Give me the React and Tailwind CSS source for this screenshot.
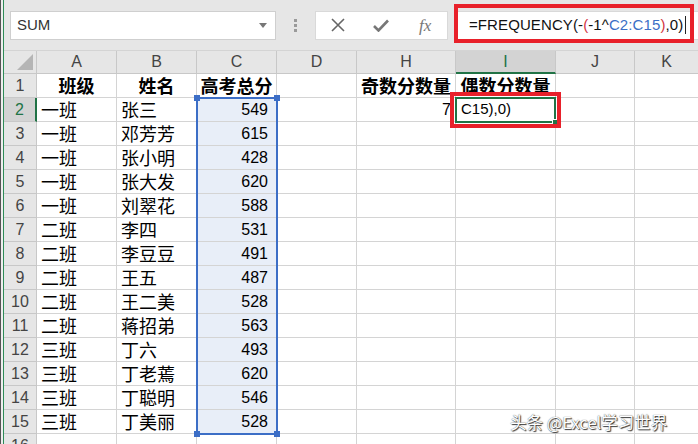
import React from 'react';

const rows = [
    ['一班', '张三', 549],
    ['一班', '邓芳芳', 615],
    ['一班', '张小明', 428],
    ['一班', '张大发', 620],
    ['一班', '刘翠花', 588],
    ['二班', '李四', 531],
    ['二班', '李豆豆', 491],
    ['二班', '王五', 487],
    ['二班', '王二美', 528],
    ['二班', '蒋招弟', 563],
    ['三班', '丁六', 493],
    ['三班', '丁老蔫', 620],
    ['三班', '丁聪明', 546],
    ['三班', '丁美丽', 528],
];

const cjk = "font-['Noto_Sans_CJK_SC',sans-serif]";
const num = "font-['Liberation_Sans','Noto_Sans_CJK_SC',sans-serif]";

const cell = 'h-full border-r border-b border-[#d4d4d4] flex items-center shrink-0';

const App = () => {
    return (
        <div className="w-[698px] h-[444px] overflow-hidden bg-white flex relative">
            {/* left edge of the window behind */}
            <div className="w-[4px] h-full bg-[#eeeeee] border-l border-[#555] border-r border-r-[#2e8b57] shrink-0"></div>

            <div className="flex-1 flex flex-col">
                {/* Formula bar */}
                <div className="h-[51px] bg-[#e6e6e6] flex items-center pl-[6px] border-b border-[#d4d4d4] shrink-0">
                    <div className="w-[266px] h-[29px] bg-white border border-[#cfcfcf] flex items-center pl-[6px] pr-[8px]">
                        <span className={`${num} text-[15px] text-[#333] flex-1`}>SUM</span>
                        <svg width="8" height="5" viewBox="0 0 8 5"><path d="M0 0h8L4 5z" fill="#777" /></svg>
                    </div>
                    <div className="w-[39px] flex flex-col items-center gap-[2px]">
                        <div className="w-[3px] h-[3px] bg-[#9a9a9a]"></div>
                        <div className="w-[3px] h-[3px] bg-[#9a9a9a]"></div>
                        <div className="w-[3px] h-[3px] bg-[#9a9a9a]"></div>
                    </div>
                    <div className="w-[133px] h-[29px] bg-white border border-[#d9d9d9] flex items-center pl-[15px]">
                        <svg width="14" height="14" viewBox="0 0 14 14"><path d="M1 1l12 12M13 1L1 13" stroke="#666" strokeWidth="1.6" /></svg>
                        <svg className="ml-[28px]" width="16" height="13" viewBox="0 0 16 13"><path d="M1 7l4.5 4.5L15 1.5" stroke="#777" strokeWidth="2.6" fill="none" /></svg>
                        <span className="ml-[30px] font-['Liberation_Serif',serif] italic text-[17px] text-[#777] leading-none">fx</span>
                    </div>
                    <div className="flex-1 h-[29px] bg-white ml-[6px] flex items-center pl-[14px] border-y border-l border-[#d9d9d9]">
                        <span className={`${num} text-[15px] tracking-[0.1px] text-[#111] whitespace-nowrap`}>
                            =FREQUENCY(-<span className="text-[#d2353f]">(</span>-1^<span className="text-[#3b6fc6]">C2:C15</span><span className="text-[#d2353f]">)</span>,0)
                        </span>
                        <span className="w-[1px] h-[18px] bg-[#222] ml-[2px]"></span>
                    </div>
                </div>

                {/* Column headers */}
                <div className={`h-[23px] flex bg-[#e6e6e6] text-[16px] text-[#444] ${num} shrink-0`}>
                    <div className="w-[33px] h-full border-r border-b border-[#c8c8c8] flex items-end justify-end pr-[3px] pb-[3px] shrink-0">
                        <svg width="16" height="16" viewBox="0 0 16 16"><path d="M16 0V16H0z" fill="#b5b5b5" /></svg>
                    </div>
                    <div className="w-[80px] h-full border-r border-b border-[#c8c8c8] flex items-center justify-center shrink-0">A</div>
                    <div className="w-[80px] h-full border-r border-b border-[#c8c8c8] flex items-center justify-center shrink-0">B</div>
                    <div className="w-[80px] h-full border-r border-b border-[#c8c8c8] flex items-center justify-center shrink-0">C</div>
                    <div className="w-[80px] h-full border-r border-b border-[#c8c8c8] flex items-center justify-center shrink-0">D</div>
                    <div className="w-[99px] h-full border-r border-b border-[#c8c8c8] flex items-center justify-center shrink-0">H</div>
                    <div className="w-[100px] h-full border-r border-[#c8c8c8] border-b-2 border-b-[#217346] bg-[#d3d3d3] text-[#217346] flex items-center justify-center shrink-0">I</div>
                    <div className="w-[79px] h-full border-r border-b border-[#c8c8c8] flex items-center justify-center shrink-0">J</div>
                    <div className="flex-1 h-full border-b border-[#c8c8c8] flex items-center justify-center">K</div>
                </div>

                {/* Row 1 */}
                <div className={`h-[24px] flex shrink-0 ${cjk} text-[18px] font-bold text-black`}>
                    <div className={`w-[33px] h-full bg-[#e6e6e6] border-r border-b border-[#c8c8c8] flex items-center justify-center text-[16px] font-normal text-[#444] ${num} shrink-0`}>1</div>
                    <div className={`${cell} w-[80px] justify-center`}>班级</div>
                    <div className={`${cell} w-[80px] justify-center`}>姓名</div>
                    <div className={`${cell} w-[80px] justify-center whitespace-nowrap`}>高考总分</div>
                    <div className={`${cell} w-[80px]`}></div>
                    <div className={`${cell} w-[99px] justify-center whitespace-nowrap`}>奇数分数量</div>
                    <div className={`${cell} w-[100px] justify-center whitespace-nowrap`}>偶数分数量</div>
                    <div className={`${cell} w-[79px]`}></div>
                    <div className="flex-1 h-full border-b border-[#d4d4d4]"></div>
                </div>

                {/* Data rows */}
                {rows.map((r, i) => (
                    <div key={i} className={`h-[24px] flex shrink-0 text-[18px] text-black ${cjk}`}>
                        {i === 0 ? (
                            <div className={`w-[33px] h-full bg-[#d3d3d3] border-r-2 border-r-[#217346] border-b border-[#c8c8c8] flex items-center justify-center text-[16px] text-[#217346] ${num} shrink-0`}>{i + 2}</div>
                        ) : (
                            <div className={`w-[33px] h-full bg-[#e6e6e6] border-r border-b border-[#c8c8c8] flex items-center justify-center text-[16px] text-[#444] ${num} shrink-0`}>{i + 2}</div>
                        )}
                        <div className={`${cell} w-[80px] pl-[4px]`}>{r[0]}</div>
                        <div className={`${cell} w-[80px] pl-[4px]`}>{r[1]}</div>
                        <div className={`${cell} w-[80px] justify-end pr-[8px] bg-[#e8eef8] ${num} text-[16px]`}>{r[2]}</div>
                        <div className={`${cell} w-[80px]`}></div>
                        <div className={`${cell} w-[99px] justify-end pr-[4px] ${num} text-[16px]`}>{i === 0 ? '7' : ''}</div>
                        <div className={`${cell} w-[100px] pl-[5px] ${num} text-[15px] whitespace-nowrap`}>{i === 0 ? 'C15),0)' : ''}</div>
                        <div className={`${cell} w-[79px]`}></div>
                        <div className="flex-1 h-full border-b border-[#d4d4d4]"></div>
                    </div>
                ))}

                {/* Row 16 */}
                <div className="h-[24px] flex shrink-0">
                    <div className={`w-[33px] h-full bg-[#e6e6e6] border-r border-[#c8c8c8] flex items-center justify-center text-[16px] text-[#444] ${num} shrink-0`}>16</div>
                    <div className={`${cell} w-[80px]`}></div>
                    <div className={`${cell} w-[80px]`}></div>
                    <div className={`${cell} w-[80px]`}></div>
                    <div className={`${cell} w-[80px]`}></div>
                    <div className={`${cell} w-[99px]`}></div>
                    <div className={`${cell} w-[100px]`}></div>
                    <div className={`${cell} w-[79px]`}></div>
                </div>
            </div>

            {/* Red highlight around formula */}
            <div className="absolute left-[454px] top-[4px] w-[240px] h-[39px] border-4 border-[#e8202a]"></div>

            {/* Referenced range C2:C15 */}
            <div className="absolute left-[196px] top-[97px] w-[82px] h-[338px] border-2 border-[#3c6ec6]"></div>
            <div className="absolute left-[194px] top-[95px] w-[6px] h-[6px] bg-[#3c6ec6]"></div>
            <div className="absolute left-[274px] top-[95px] w-[6px] h-[6px] bg-[#3c6ec6]"></div>
            <div className="absolute left-[194px] top-[431px] w-[6px] h-[6px] bg-[#3c6ec6]"></div>
            <div className="absolute left-[274px] top-[431px] w-[6px] h-[6px] bg-[#3c6ec6]"></div>

            {/* Active cell I2 */}
            <div className="absolute left-[455px] top-[97px] w-[101px] h-[26px] border-2 border-[#217346]"></div>
            <div className="absolute left-[552px] top-[119px] w-[6px] h-[6px] bg-[#217346] border border-white"></div>
            <div className="absolute left-[450px] top-[92px] w-[111px] h-[36px] border-4 border-[#e8202a]"></div>

            {/* Watermark */}
            <div className={`absolute left-[510px] top-[410px] text-[16.5px] text-white ${cjk} [text-shadow:1px_1px_1px_#333,0_0_1px_#444] whitespace-nowrap`}>
                头条 @Excel学习世界
            </div>
        </div>
    );
};

export default App;
